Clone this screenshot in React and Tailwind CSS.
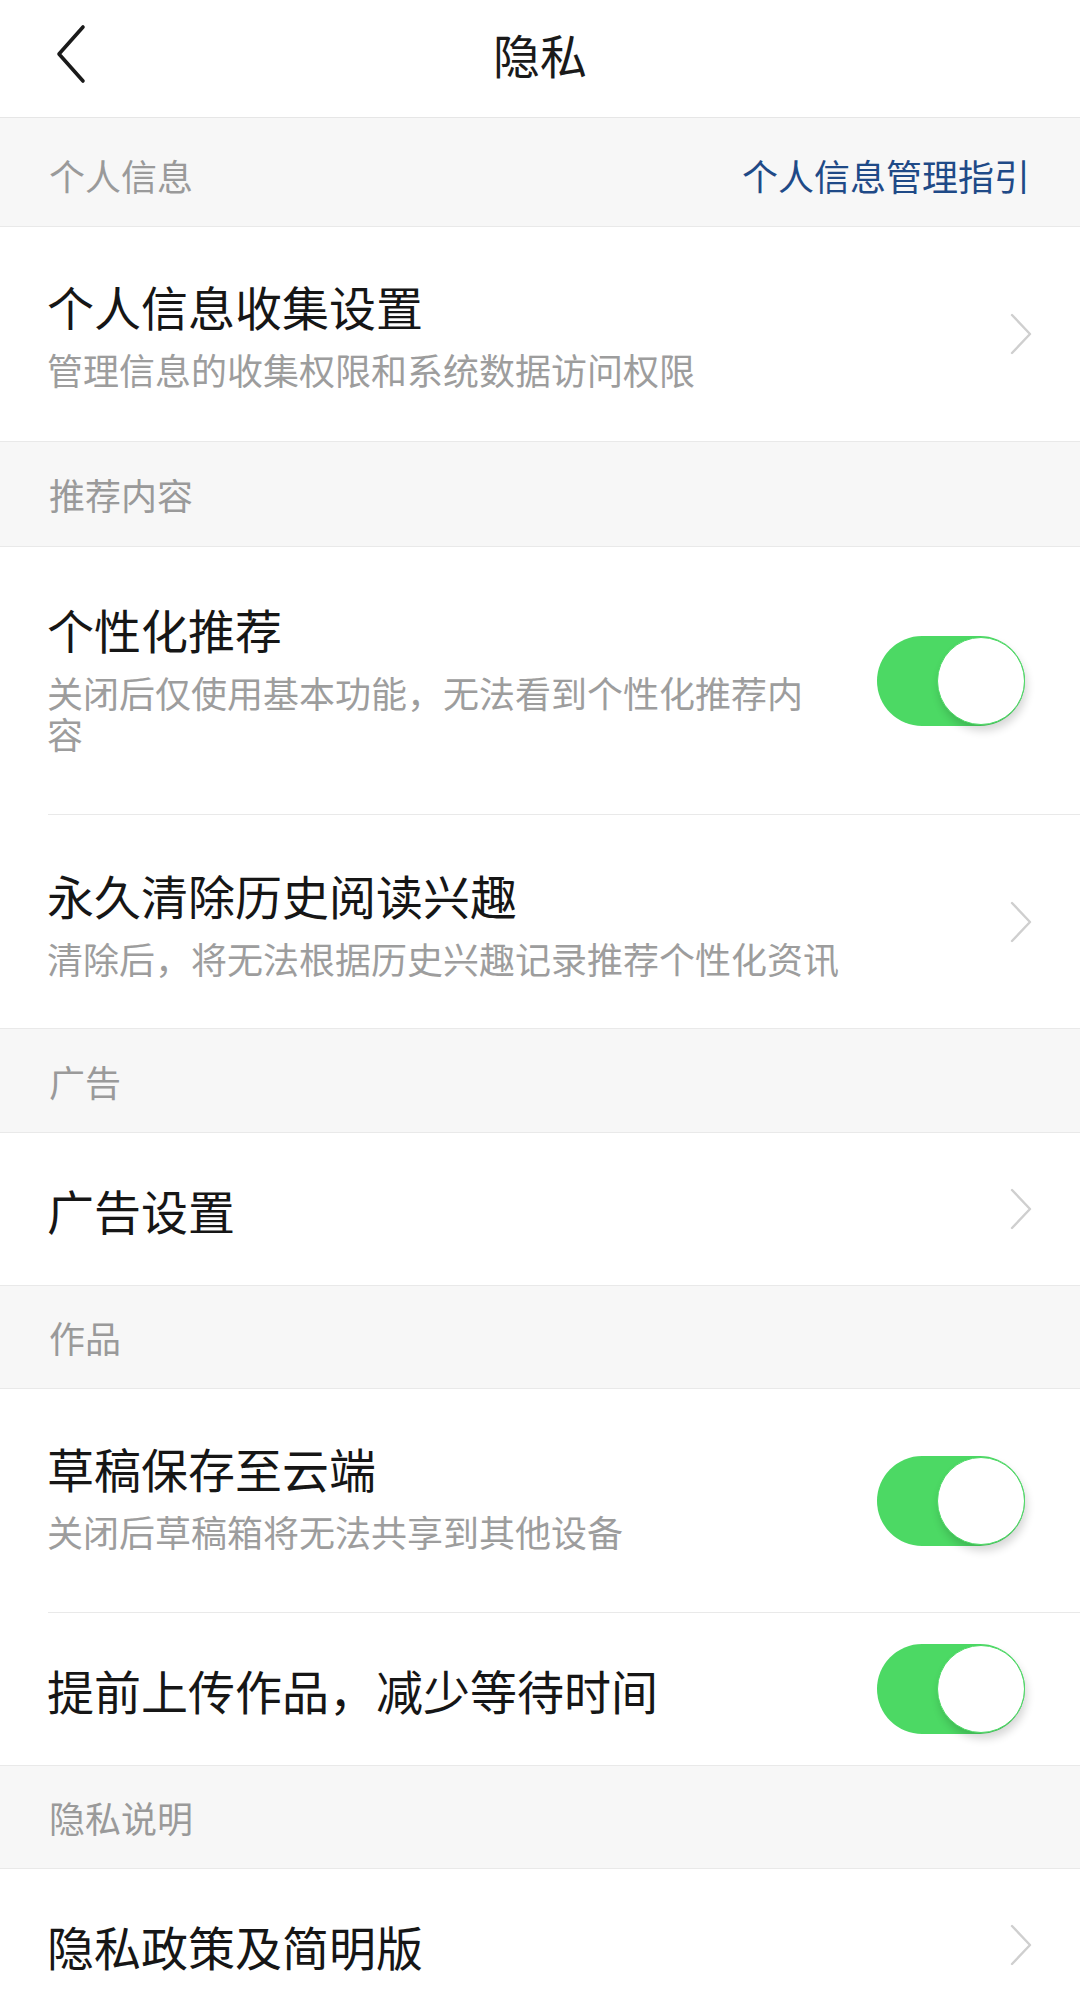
import React from 'react'

const FONT = { fontFamily: '"Noto Sans CJK SC", "Noto Sans", sans-serif' }

function BackIcon() {
  return (
    <svg width="34" height="60" viewBox="0 0 34 60" fill="none">
      <path d="M30 3 L6 30 L30 57" stroke="#1a1a1a" strokeWidth="3.6" strokeLinecap="round" strokeLinejoin="round" />
    </svg>
  )
}

function Chevron() {
  return (
    <svg width="24" height="42" viewBox="0 0 24 42" fill="none" className="shrink-0">
      <path d="M3 2 L21 21 L3 40" stroke="#cfcfcf" strokeWidth="2.4" strokeLinecap="round" strokeLinejoin="round" />
    </svg>
  )
}

function Toggle() {
  return (
    <div className="relative w-[148px] h-[90px] shrink-0 rounded-full bg-[#4cd964]">
      <div className="absolute right-0 top-[1px] w-[88px] h-[88px] rounded-full bg-white border-[1.5px] border-[#4cd964] shadow-[2px_6px_8px_rgba(0,0,0,0.16)]" />
    </div>
  )
}

function SectionHeader({ label, link, className = '' }) {
  return (
    <div className={`flex items-center justify-between bg-[#f7f7f7] border-y border-[#e9e9e9] pl-[49px] pr-[50px] ${className}`}>
      <span className="text-[36px] leading-none text-[#9a9a9a]">{label}</span>
      {link && <span className="text-[36px] leading-none text-[#1f4a87]">{link}</span>}
    </div>
  )
}

function Row({ title, sub, right, className, textClass = '' }) {
  return (
    <div className={`flex bg-white pl-[47px] pr-[55px] ${className}`}>
      <div className={`flex-1 min-w-0 ${textClass}`}>
        <div className="text-[47px] leading-[60px] text-[#161616]">{title}</div>
        {sub && <div className="mt-[13px] text-[36px] leading-[41px] text-[#9d9d9d]">{sub}</div>}
      </div>
      <div className="self-center ml-[60px] flex items-center">
        {right === 'toggle' ? <Toggle /> : <div className="mr-[-8px]"><Chevron /></div>}
      </div>
    </div>
  )
}

function Divider() {
  return (
    <div className="bg-white">
      <div className="ml-[48px] h-px bg-[#e9e9e9]" />
    </div>
  )
}

export default function App() {
  return (
    <div className="w-[1080px] h-[2012px] overflow-hidden bg-white" style={FONT}>
      <div className="grid grid-cols-[1fr_auto_1fr] items-center h-[118px] border-b border-[#e6e6e6] pb-[10px]">
        <div className="pl-[53px] flex items-center">
          <BackIcon />
        </div>
        <div className="text-[47px] leading-none text-[#1a1a1a]">隐私</div>
        <div />
      </div>

      <SectionHeader label="个人信息" link="个人信息管理指引" className="h-[109px] border-t-0 pt-[6px]" />
      <Row
        title="个人信息收集设置"
        sub="管理信息的收集权限和系统数据访问权限"
        right="chevron"
        className="h-[214px]"
        textClass="pt-[49px]"
      />

      <SectionHeader label="推荐内容" className="h-[106px]" />
      <Row
        title="个性化推荐"
        sub="关闭后仅使用基本功能，无法看到个性化推荐内容"
        right="toggle"
        className="h-[267px]"
        textClass="pt-[52px]"
      />
      <Divider />
      <Row
        title="永久清除历史阅读兴趣"
        sub="清除后，将无法根据历史兴趣记录推荐个性化资讯"
        right="chevron"
        className="h-[213px]"
        textClass="pt-[50px]"
      />

      <SectionHeader label="广告" className="h-[105px]" />
      <Row title="广告设置" right="chevron" className="h-[152px] items-center" textClass="pt-[1px]" />

      <SectionHeader label="作品" className="h-[104px]" />
      <Row
        title="草稿保存至云端"
        sub="关闭后草稿箱将无法共享到其他设备"
        right="toggle"
        className="h-[223px]"
        textClass="pt-[49px]"
      />
      <Divider />
      <Row title="提前上传作品，减少等待时间" right="toggle" className="h-[152px] items-center" textClass="pt-[1px]" />

      <SectionHeader label="隐私说明" className="h-[104px]" />
      <Row title="隐私政策及简明版" right="chevron" className="h-[152px] items-center" textClass="pt-[1px]" />
    </div>
  )
}
